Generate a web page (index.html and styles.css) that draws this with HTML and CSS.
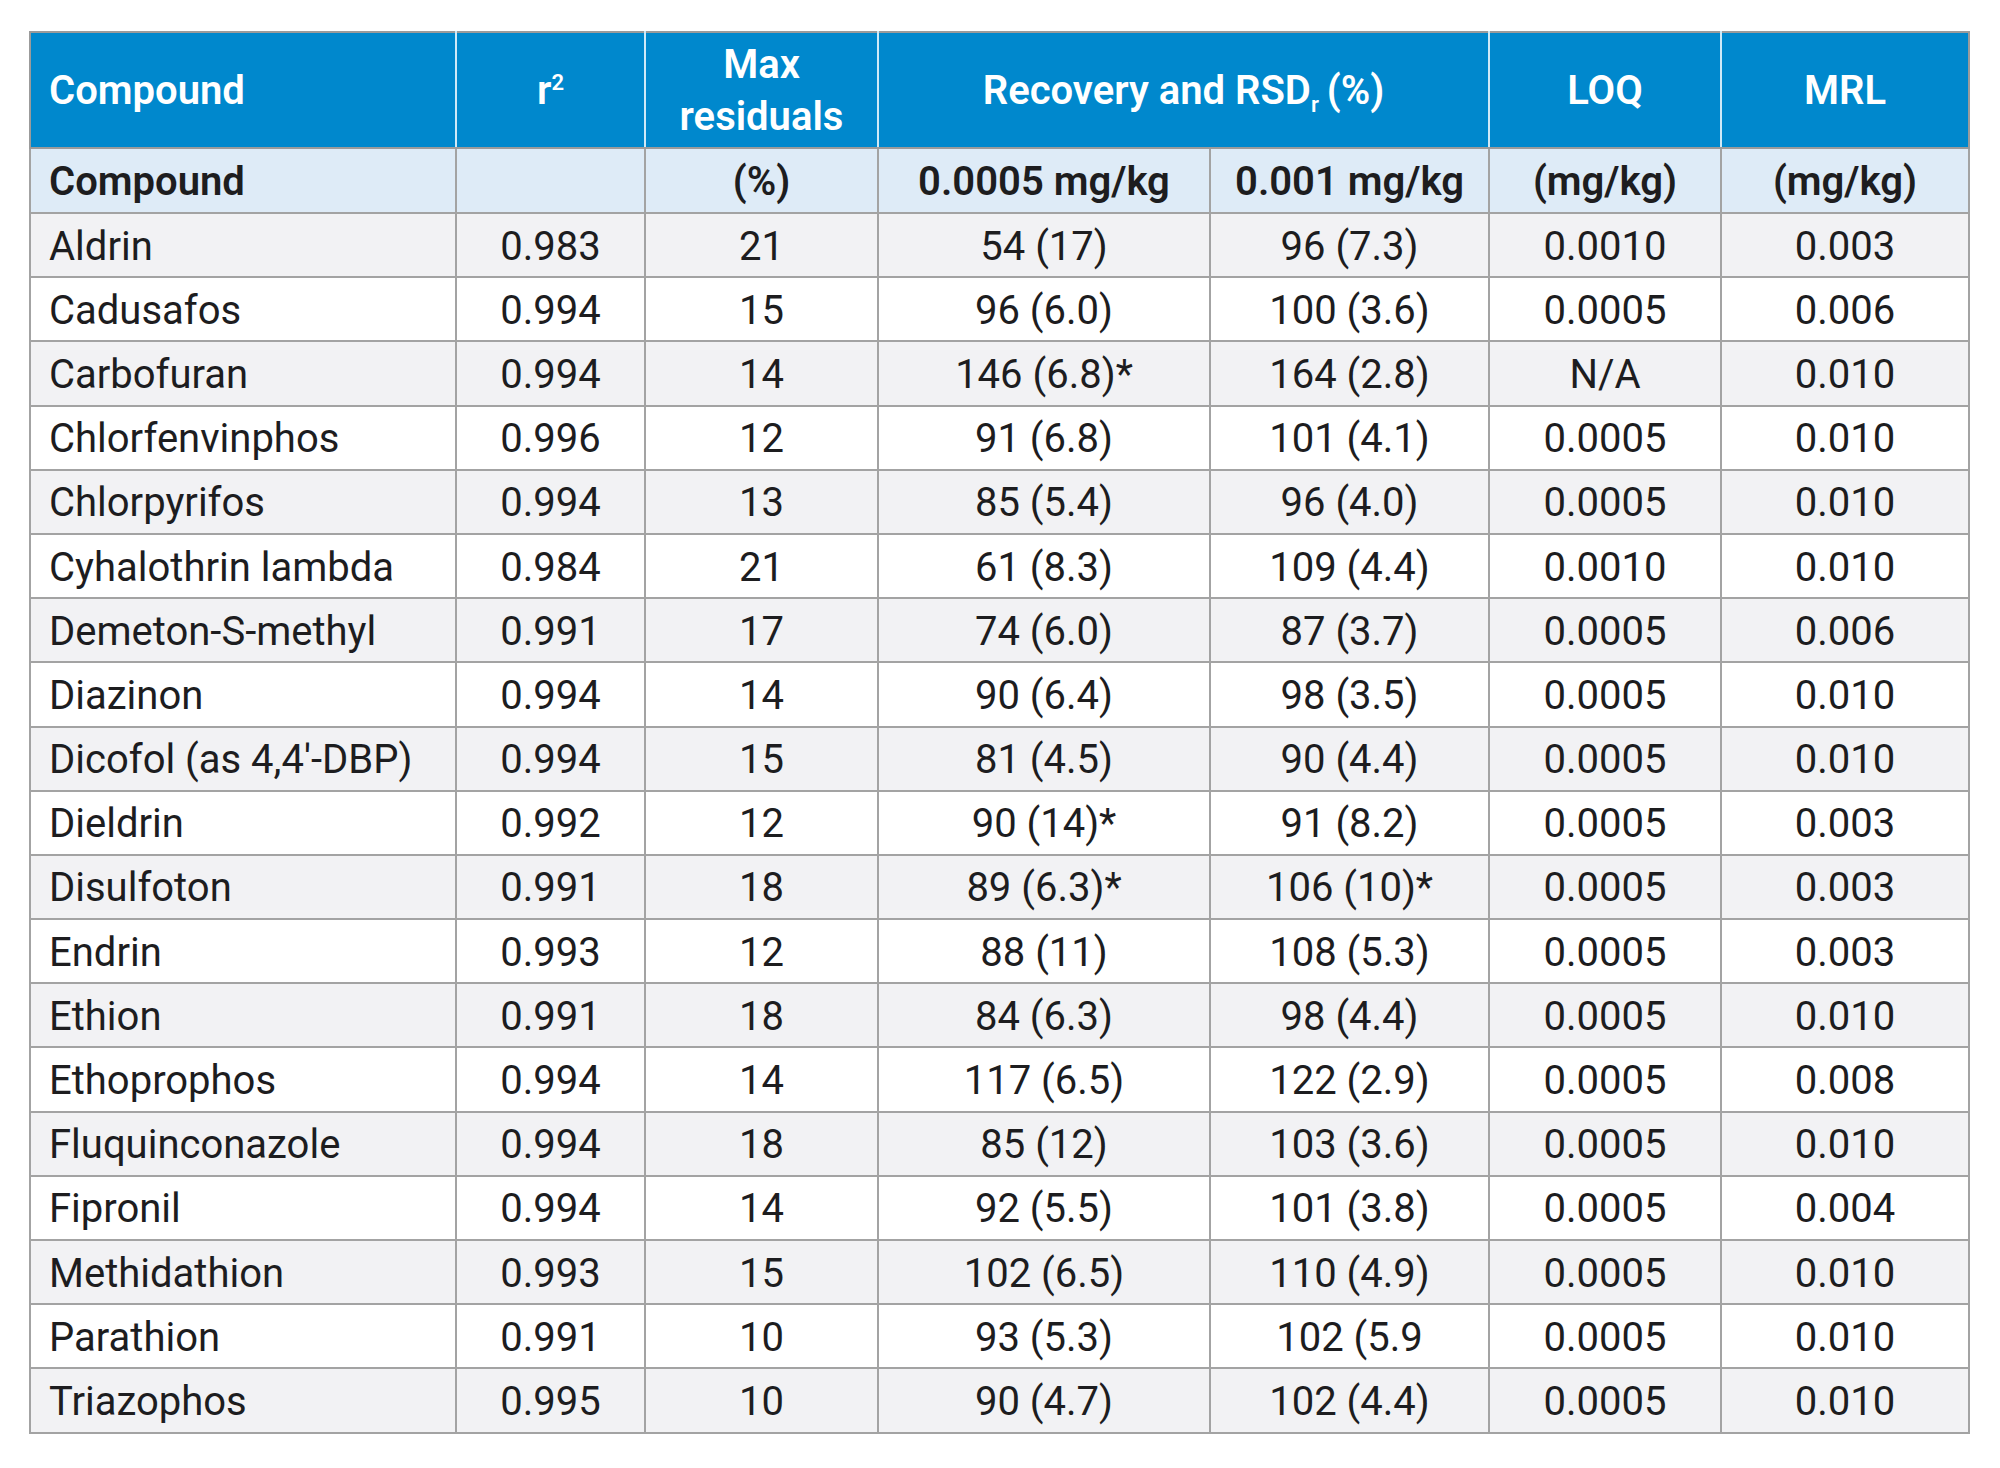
FILE: index.html
```html
<!DOCTYPE html>
<html>
<head>
<meta charset="utf-8">
<link rel="stylesheet" href="styles.css">
</head>
<body>
<table class="data">
  <colgroup>
    <col class="c1"><col class="c2"><col class="c3"><col class="c4"><col class="c5"><col class="c6"><col class="c7">
  </colgroup>
  <thead>
    <tr class="head">
      <th class="left">Compound</th>
      <th>r<sup>2</sup></th>
      <th>Max<br>residuals</th>
      <th colspan="2">Recovery and RSD<sub>r</sub>(%)</th>
      <th>LOQ</th>
      <th>MRL</th>
    </tr>
    <tr class="sub">
      <th class="left">Compound</th>
      <th></th>
      <th>(%)</th>
      <th>0.0005 mg/kg</th>
      <th>0.001 mg/kg</th>
      <th>(mg/kg)</th>
      <th>(mg/kg)</th>
    </tr>
  </thead>
  <tbody>
    <tr><td class="left">Aldrin</td><td>0.983</td><td>21</td><td>54 (17)</td><td>96 (7.3)</td><td>0.0010</td><td>0.003</td></tr>
    <tr><td class="left">Cadusafos</td><td>0.994</td><td>15</td><td>96 (6.0)</td><td>100 (3.6)</td><td>0.0005</td><td>0.006</td></tr>
    <tr><td class="left">Carbofuran</td><td>0.994</td><td>14</td><td>146 (6.8)*</td><td>164 (2.8)</td><td>N/A</td><td>0.010</td></tr>
    <tr><td class="left">Chlorfenvinphos</td><td>0.996</td><td>12</td><td>91 (6.8)</td><td>101 (4.1)</td><td>0.0005</td><td>0.010</td></tr>
    <tr><td class="left">Chlorpyrifos</td><td>0.994</td><td>13</td><td>85 (5.4)</td><td>96 (4.0)</td><td>0.0005</td><td>0.010</td></tr>
    <tr><td class="left">Cyhalothrin lambda</td><td>0.984</td><td>21</td><td>61 (8.3)</td><td>109 (4.4)</td><td>0.0010</td><td>0.010</td></tr>
    <tr><td class="left">Demeton-S-methyl</td><td>0.991</td><td>17</td><td>74 (6.0)</td><td>87 (3.7)</td><td>0.0005</td><td>0.006</td></tr>
    <tr><td class="left">Diazinon</td><td>0.994</td><td>14</td><td>90 (6.4)</td><td>98 (3.5)</td><td>0.0005</td><td>0.010</td></tr>
    <tr><td class="left">Dicofol (as 4,4′-DBP)</td><td>0.994</td><td>15</td><td>81 (4.5)</td><td>90 (4.4)</td><td>0.0005</td><td>0.010</td></tr>
    <tr><td class="left">Dieldrin</td><td>0.992</td><td>12</td><td>90 (14)*</td><td>91 (8.2)</td><td>0.0005</td><td>0.003</td></tr>
    <tr><td class="left">Disulfoton</td><td>0.991</td><td>18</td><td>89 (6.3)*</td><td>106 (10)*</td><td>0.0005</td><td>0.003</td></tr>
    <tr><td class="left">Endrin</td><td>0.993</td><td>12</td><td>88 (11)</td><td>108 (5.3)</td><td>0.0005</td><td>0.003</td></tr>
    <tr><td class="left">Ethion</td><td>0.991</td><td>18</td><td>84 (6.3)</td><td>98 (4.4)</td><td>0.0005</td><td>0.010</td></tr>
    <tr><td class="left">Ethoprophos</td><td>0.994</td><td>14</td><td>117 (6.5)</td><td>122 (2.9)</td><td>0.0005</td><td>0.008</td></tr>
    <tr><td class="left">Fluquinconazole</td><td>0.994</td><td>18</td><td>85 (12)</td><td>103 (3.6)</td><td>0.0005</td><td>0.010</td></tr>
    <tr><td class="left">Fipronil</td><td>0.994</td><td>14</td><td>92 (5.5)</td><td>101 (3.8)</td><td>0.0005</td><td>0.004</td></tr>
    <tr><td class="left">Methidathion</td><td>0.993</td><td>15</td><td>102 (6.5)</td><td>110 (4.9)</td><td>0.0005</td><td>0.010</td></tr>
    <tr><td class="left">Parathion</td><td>0.991</td><td>10</td><td>93 (5.3)</td><td>102 (5.9</td><td>0.0005</td><td>0.010</td></tr>
    <tr><td class="left">Triazophos</td><td>0.995</td><td>10</td><td>90 (4.7)</td><td>102 (4.4)</td><td>0.0005</td><td>0.010</td></tr>
  </tbody>
</table>
</body>
</html>
```
FILE: styles.css
```css
html, body {
  margin: 0;
  padding: 0;
  background: #ffffff;
}
body {
  padding: 31px 0 0 29px;
  font-family: Roboto, "Liberation Sans", sans-serif;
  color: #1d1d1f;
}
.data {
  border-collapse: collapse;
  table-layout: fixed;
  width: 1939px;
  font-size: 40px;
  border: 2px solid #9b9b9b;
}
.c1 { width: 426px; }
.c2 { width: 189px; }
.c3 { width: 233px; }
.c4 { width: 332px; }
.c5 { width: 279px; }
.c6 { width: 232px; }
.c7 { width: 248px; }

.data th, .data td {
  padding: 0 10px;
  text-align: center;
  vertical-align: middle;
  border: 2px solid #a3a3a3;
  white-space: nowrap;
}
.data .left {
  text-align: left;
  padding-left: 18px;
}
.head th {
  background: #0088cd;
  color: #ffffff;
  font-weight: 600;
  height: 112px;
  padding-top: 2px;
  line-height: 52px;
  border-left-color: #cfe9f7;
  border-right-color: #cfe9f7;
  border-top-color: #9b9b9b;
  border-bottom-color: #9b9b9b;
}
.head th:first-child { border-left-color: #9b9b9b; }
.head th:last-child { border-right-color: #9b9b9b; }
.head sup {
  font-size: 22px;
  vertical-align: 14px;
  line-height: 0;
}
.head sub {
  font-size: 22px;
  vertical-align: -8px;
  line-height: 0;
  margin-right: 8px;
}
.sub th {
  background: #deebf7;
  color: #1d1d1f;
  font-weight: 600;
  height: 60px;
  padding-top: 3px;
  line-height: 1;
}
.data td {
  height: 59.2px;
  padding-top: 3px;
  line-height: 1;
}
tbody tr:nth-child(odd) td { background: #f2f2f4; }
tbody tr:nth-child(even) td { background: #ffffff; }
```
